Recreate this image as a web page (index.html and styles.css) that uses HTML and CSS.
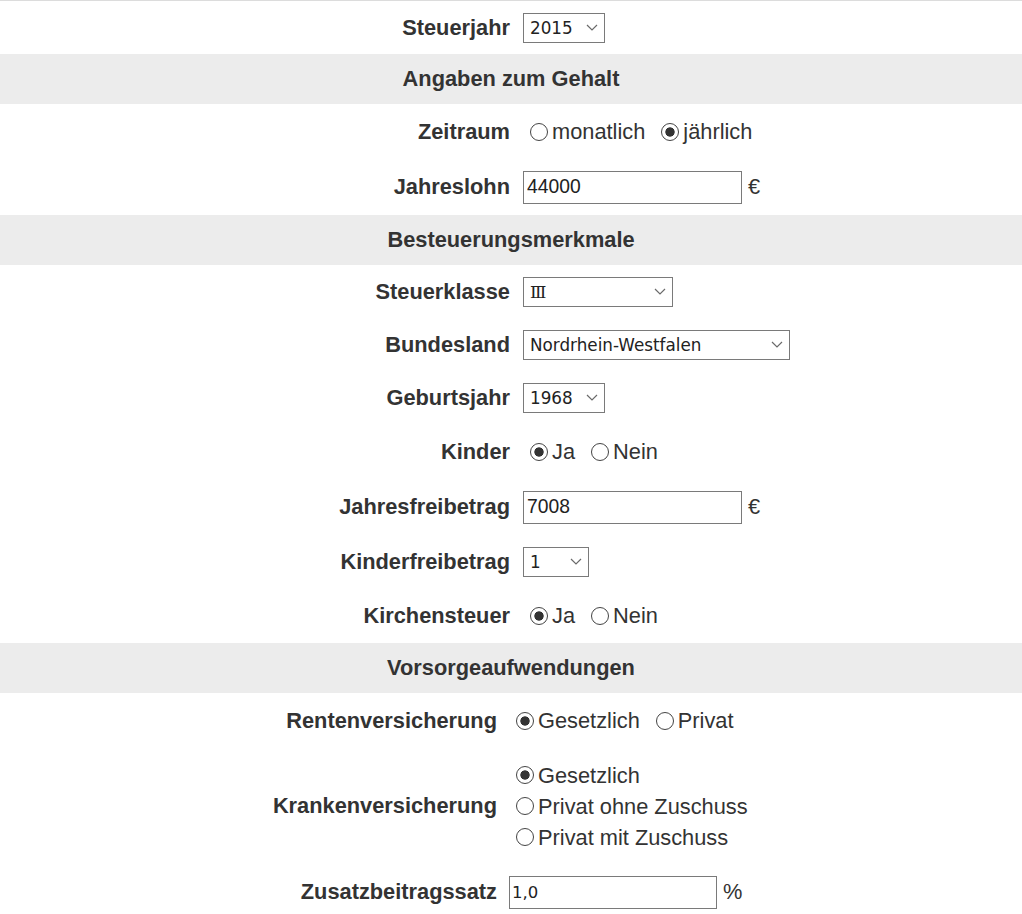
FILE: index.html
```html
<!DOCTYPE html>
<html>
<head>
    <title>Lohnsteuer-Rechner</title>
    <link rel="stylesheet" href="styles.css">
</head>
<body>
    <div class="page">
        <!-- Steuerjahr -->
        <section class="group">
            <div class="field">
                <label class="field-label" for="jahr">Steuerjahr</label>
                <div class="field-value">
                    <span class="select select-year">
                        <select id="jahr"><option>2015</option></select>
                        <svg class="chevron" viewBox="0 0 12 7" width="12" height="7"><polyline points="1,1 6,6 11,1"/></svg>
                    </span>
                </div>
            </div>
        </section>

        <h2 class="band">Angaben zum Gehalt</h2>
        <section class="group">
            <div class="field">
                <span class="field-label">Zeitraum</span>
                <div class="field-value options">
                    <label class="option"><input type="radio" name="zeitraum">monatlich</label>
                    <label class="option"><input type="radio" name="zeitraum" checked>jährlich</label>
                </div>
            </div>
            <div class="field">
                <label class="field-label" for="lohn">Jahreslohn</label>
                <div class="field-value">
                    <input class="text-input" id="lohn" type="text" value="44000">
                    <span class="unit">€</span>
                </div>
            </div>
        </section>

        <h2 class="band">Besteuerungsmerkmale</h2>
        <section class="group">
            <div class="field">
                <label class="field-label" for="klasse">Steuerklasse</label>
                <div class="field-value">
                    <span class="select select-class">
                        <select id="klasse"><option>Ⅲ</option></select>
                        <svg class="chevron" viewBox="0 0 12 7" width="12" height="7"><polyline points="1,1 6,6 11,1"/></svg>
                    </span>
                </div>
            </div>
            <div class="field">
                <label class="field-label" for="land">Bundesland</label>
                <div class="field-value">
                    <span class="select select-land">
                        <select id="land"><option>Nordrhein-Westfalen</option></select>
                        <svg class="chevron" viewBox="0 0 12 7" width="12" height="7"><polyline points="1,1 6,6 11,1"/></svg>
                    </span>
                </div>
            </div>
            <div class="field">
                <label class="field-label" for="geburt">Geburtsjahr</label>
                <div class="field-value">
                    <span class="select select-year">
                        <select id="geburt"><option>1968</option></select>
                        <svg class="chevron" viewBox="0 0 12 7" width="12" height="7"><polyline points="1,1 6,6 11,1"/></svg>
                    </span>
                </div>
            </div>
            <div class="field">
                <span class="field-label">Kinder</span>
                <div class="field-value options">
                    <label class="option"><input type="radio" name="kinder" checked>Ja</label>
                    <label class="option"><input type="radio" name="kinder">Nein</label>
                </div>
            </div>
            <div class="field">
                <label class="field-label" for="freibetrag">Jahresfreibetrag</label>
                <div class="field-value">
                    <input class="text-input" id="freibetrag" type="text" value="7008">
                    <span class="unit">€</span>
                </div>
            </div>
            <div class="field">
                <label class="field-label" for="kfb">Kinderfreibetrag</label>
                <div class="field-value">
                    <span class="select select-kids">
                        <select id="kfb"><option>1</option></select>
                        <svg class="chevron" viewBox="0 0 12 7" width="12" height="7"><polyline points="1,1 6,6 11,1"/></svg>
                    </span>
                </div>
            </div>
            <div class="field">
                <span class="field-label">Kirchensteuer</span>
                <div class="field-value options">
                    <label class="option"><input type="radio" name="kirche" checked>Ja</label>
                    <label class="option"><input type="radio" name="kirche">Nein</label>
                </div>
            </div>
        </section>

        <h2 class="band">Vorsorgeaufwendungen</h2>
        <section class="group group-wide">
            <div class="field">
                <span class="field-label">Rentenversicherung</span>
                <div class="field-value options">
                    <label class="option"><input type="radio" name="rente" checked>Gesetzlich</label>
                    <label class="option"><input type="radio" name="rente">Privat</label>
                </div>
            </div>
            <div class="field">
                <span class="field-label">Krankenversicherung</span>
                <div class="field-value options options-stack">
                    <label class="option"><input type="radio" name="kranken" checked>Gesetzlich</label>
                    <label class="option"><input type="radio" name="kranken">Privat ohne Zuschuss</label>
                    <label class="option"><input type="radio" name="kranken">Privat mit Zuschuss</label>
                </div>
            </div>
            <div class="field">
                <label class="field-label" for="zusatz">Zusatzbeitragssatz</label>
                <div class="field-value">
                    <input class="text-input text-input-short" id="zusatz" type="text" value="1,0">
                    <span class="unit">%</span>
                </div>
            </div>
        </section>
    </div>
</body>
</html>
```

FILE: styles.css
```css
body {
    margin: 0;
    background: #fff;
    color: #333;
    font-family: "Liberation Sans", Arial, sans-serif;
    font-size: 21.8px;
}

.page {
    border-top: 1px solid #dcdcdc;
}

.band {
    margin: 0;
    height: 50px;
    line-height: 50px;
    background: #ececec;
    text-align: center;
    font-size: 21.8px;
    font-weight: bold;
}

.field {
    display: grid;
    grid-template-columns: 510px auto;
    column-gap: 13px;
    align-items: center;
    padding: 11.5px 0;
}

.group-wide .field {
    grid-template-columns: 497px auto;
    column-gap: 12px;
}

.field-label {
    text-align: right;
    font-weight: bold;
}

.field-value {
    display: flex;
    align-items: center;
}

/* selects */
.select {
    display: inline-flex;
    align-items: center;
    box-sizing: border-box;
    height: 30px;
    border: 1px solid #7a7a7a;
    background: #fff;
}

.select select {
    -webkit-appearance: none;
    appearance: none;
    flex: 1;
    min-width: 0;
    height: 100%;
    border: 0;
    padding: 0 0 0 6px;
    background: transparent;
    color: #222;
    font-family: "DejaVu Sans", sans-serif;
    font-size: 16.8px;
    outline: none;
}

.chevron {
    flex: none;
    margin: 0 6px 0 4px;
    fill: none;
    stroke: #6a6a6a;
    stroke-width: 1.2;
}

.select-year { width: 82px; }
.select-class { width: 150px; }
.select-land { width: 267px; }
.select-kids { width: 66px; }

.select-class select {
    font-family: "DejaVu Serif", "Liberation Serif", serif;
    font-size: 17px;
}

/* text inputs */
.text-input {
    box-sizing: border-box;
    width: 219px;
    height: 33px;
    border: 1px solid #7a7a7a;
    padding: 0 3px;
    color: #222;
    font-family: "Liberation Sans", Arial, sans-serif;
    font-size: 19.3px;
    outline: none;
}

.text-input-short {
    width: 208px;
    padding-left: 2px;
    font-family: "DejaVu Sans", sans-serif;
    font-size: 16.5px;
}

.unit {
    margin-left: 6px;
}

/* radios */
.options {
    line-height: 32px;
}

.options-stack {
    flex-direction: column;
    align-items: flex-start;
    line-height: 31px;
}

.option {
    display: inline-flex;
    align-items: center;
    margin-right: 9px;
}

.option input {
    -webkit-appearance: none;
    appearance: none;
    box-sizing: border-box;
    width: 18px;
    height: 18px;
    margin: 0 4px 0 7px;
    border: 1.5px solid #444;
    border-radius: 50%;
    background: #fff;
}

.option input:checked {
    background: radial-gradient(circle, #333 0 4.3px, #fff 5px);
}
```
